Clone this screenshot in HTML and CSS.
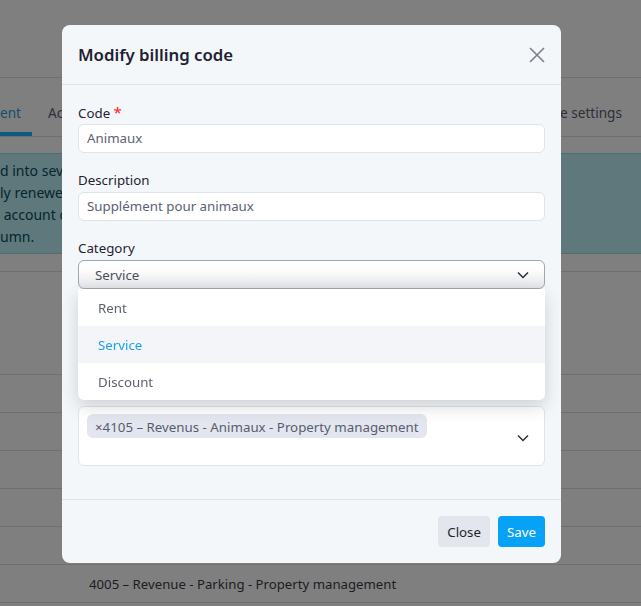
FILE: index.html
```html
<!DOCTYPE html>
<html lang="en">
<head>
<meta charset="utf-8">
<title>Modify billing code</title>
<link rel="stylesheet" href="styles.css">
</head>
<body>
<div class="page">
  <header class="topbar"></header>
  <nav class="tabs">
    <span class="tab active">ent</span>
    <span class="tab clip"><span class="clip-in">Accounts</span></span>
    <span class="tab last">Invoice settings</span>
  </nav>
  <div class="alert">
    <div class="alert-text">
      <p>d into several billing codes</p>
      <p>ly renewed every month</p>
      <p>&nbsp;account code in the</p>
      <p>umn.</p>
    </div>
  </div>
  <div class="table">
    <div class="thead"></div>
    <div class="row"></div>
    <div class="row"></div>
    <div class="row"></div>
    <div class="row"></div>
    <div class="row"></div>
    <div class="row"><span class="cell">4005 – Revenue - Parking - Property management</span></div>
  </div>
</div>

<div class="backdrop"></div>

<div class="modal-wrap">
  <div class="modal">
    <div class="modal-header">
      <h2 class="modal-title">Modify billing code</h2>
      <button class="close-btn" aria-label="Close">
        <svg width="16" height="16" viewBox="0 0 16 16"><path d="M1 1L15 15M15 1L1 15" stroke="#7c808a" stroke-width="1.6" fill="none"/></svg>
      </button>
    </div>
    <div class="modal-body">
      <div class="group">
        <label class="label">Code <span class="req">*</span></label>
        <div class="input">Animaux</div>
      </div>
      <div class="group">
        <label class="label">Description</label>
        <div class="input">Supplément pour animaux</div>
      </div>
      <div class="group select-group">
        <label class="label">Category</label>
        <div class="select">
          <span>Service</span>
          <svg class="chev" width="12" height="8" viewBox="0 0 12 8"><path d="M1 1.5L6 6.5L11 1.5" stroke="#2c2f38" stroke-width="1.5" fill="none"/></svg>
        </div>
        <ul class="menu">
          <li class="opt">Rent</li>
          <li class="opt selected">Service</li>
          <li class="opt">Discount</li>
        </ul>
      </div>
      <div class="group">
        <div class="label spacer"></div>
        <div class="input tall"></div>
      </div>
      <div class="group last">
        <div class="label spacer"></div>
        <div class="multi">
          <span class="chip">×4105 – Revenus - Animaux - Property management</span>
          <svg class="chev" width="12" height="8" viewBox="0 0 12 8"><path d="M1 1.5L6 6.5L11 1.5" stroke="#2c2f38" stroke-width="1.5" fill="none"/></svg>
        </div>
      </div>
    </div>
    <div class="modal-footer">
      <button class="btn btn-light">Close</button>
      <button class="btn btn-primary">Save</button>
    </div>
  </div>
</div>
</body>
</html>
```

FILE: styles.css
```css
* { box-sizing: border-box; }
html, body { margin: 0; padding: 0; }
body {
  font-family: "Noto Sans", "Open Sans", sans-serif;
  font-size: 13.3px;
  color: #3c3e4a;
  background: #fff;
  overflow: hidden;
  height: 606px;
}
.page { width: 641px; }
.topbar { height: 78px; border-bottom: 1px solid #dedede; }
.tabs {
  display: flex;
  border-bottom: 1px solid #dedede;
  height: 59px;
}
.tab {
  font-size: 13.6px;
  line-height: 20px;
  padding: 25px 16px 9px;
  color: #5a5e70;
  border-bottom: 4px solid transparent;
  white-space: nowrap;
}
.tab.active { padding-left: 0; padding-right: 11px; color: #1f9fe0; border-bottom-color: #1ab8ff; }
.tab.clip { padding-right: 0; }
.clip-in { display: block; width: 14px; overflow: hidden; }
.tab.last { margin-left: auto; padding-right: 19px; }
.alert {
  margin-top: 16px;
  height: 101px;
  background: #bdf0f8;
  border-top: 1px solid #98dbe6;
  border-bottom: 1px solid #98dbe6;
  padding: 6px 0 5px;
  color: #0b4c5c;
  font-size: 14px;
}
.alert-text { width: 62px; overflow: hidden; }
.alert p { margin: 0; line-height: 22px; white-space: nowrap; }
.table { margin-top: 17px; }
.thead { height: 104px; border-top: 1px solid #dedede; border-bottom: 1px solid #dedede; }
.row { height: 38px; border-bottom: 1px solid #dedede; display: flex; align-items: center; }
.cell { padding-left: 89px; font-size: 13.2px; color: #3a3c48; }

.backdrop {
  position: fixed; inset: 0;
  background: rgba(0,0,0,0.5);
}
.modal-wrap {
  position: fixed; inset: 0;
}
.modal {
  margin: 25px 0 0 62px;
  width: 499px;
  background: #f4f7fa;
  border-radius: 8px;
  color: #1f2330;
}
.modal-header {
  height: 60px;
  border-bottom: 1px solid #e0e4ea;
  display: flex;
  align-items: center;
  justify-content: space-between;
  padding: 0 16px;
}
.modal-title { margin: 0; font-size: 16.8px; font-weight: 600; color: #1e2232; }
.close-btn { border: 0; background: none; padding: 0; width: 16px; height: 16px; display: flex; }
.modal-body { padding: 16px 16px 17px; }
.group { margin-bottom: 16px; position: relative; }
.label { display: block; height: 21px; line-height: 20px; padding-top: 1px; margin-bottom: 2px; color: #1f2330; }
.label.spacer { padding: 0; }
.req { color: #f22; font-size: 15px; }
.input {
  height: 29px;
  background: #fff;
  border: 1px solid #dfe3ea;
  border-radius: 6px;
  padding: 0 8px;
  line-height: 27px;
  color: #5c6173;
}
.input.tall { height: 39px; }
.select {
  height: 29px;
  border: 1px solid #a2a5ae;
  border-radius: 6px;
  background: linear-gradient(#fff 0%, #fdfdfd 35%, #e4e5e9 100%);
  padding: 0 15px 0 16px;
  display: flex;
  align-items: center;
  justify-content: space-between;
  color: #4b4f5e;
}
.menu {
  position: absolute;
  left: 0; right: 0; top: 100%;
  margin: 0; padding: 0;
  list-style: none;
  background: #fff;
  border-radius: 0 0 6px 6px;
  box-shadow: 0 6px 18px rgba(0,0,0,0.16);
  z-index: 5;
}
.opt { height: 37px; line-height: 37px; padding: 1px 0 0 20px; color: #5d6170; }
.opt.selected { background: #f3f5f8; color: #1aa3f0; }
.group.last { margin-bottom: 16px; }
.multi {
  height: 60px;
  background: #fff;
  border: 1px solid #dfe3ea;
  border-radius: 6px;
  padding: 7px 15px 0 8px;
  display: flex;
  align-items: flex-start;
  justify-content: space-between;
}
.multi .chev { margin-top: 20px; }
.chip {
  background: #e3e6ee;
  border-radius: 6px;
  height: 24px;
  line-height: 24px;
  padding: 1px 8px 0;
  color: #575c6e;
  white-space: nowrap;
}
.modal-footer {
  border-top: 1px solid #e0e4ea;
  padding: 16px;
  display: flex;
  justify-content: flex-end;
  gap: 8px;
}
.btn {
  font-family: inherit;
  font-size: 13.3px;
  height: 31px;
  border: 0;
  border-radius: 4px;
  padding: 0 9px;
}
.btn-light { background: #e3e6ed; color: #1f2330; }
.btn-primary { background: #07a2f6; color: #fff; }
```
